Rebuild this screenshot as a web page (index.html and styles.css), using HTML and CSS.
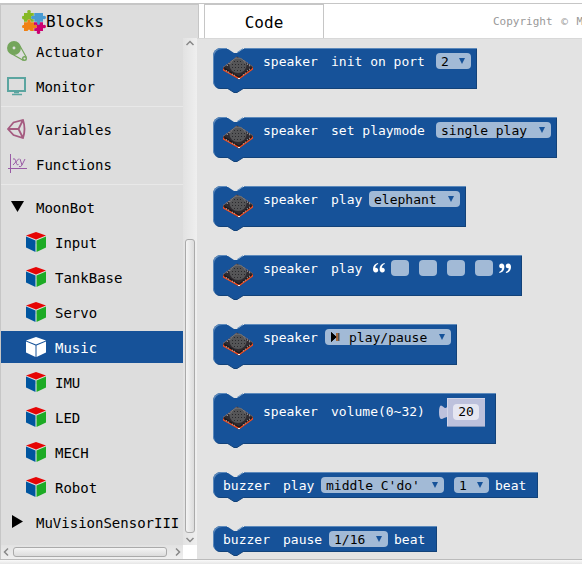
FILE: index.html
```html
<!DOCTYPE html>
<html lang="en">
<head>
<meta charset="utf-8">
<title>Blocks</title>
<link rel="stylesheet" href="styles.css">
</head>
<body>
<svg class="defs" aria-hidden="true">
  <symbol id="cube" viewBox="0 0 20 20">
    <path class="cube-top" d="M10 0 20 3.6 10 7.4 0 3.6z"/>
    <path class="cube-left" d="M0 4.6 9.5 8.4V20L0 15.6z"/>
    <path class="cube-right" d="M20 4.6 10.5 8.4V20L20 15.6z"/>
  </symbol>
  <symbol id="speaker" viewBox="0 0 30 31">
    <path d="M0 14.5 14 3.5 30 13.5V16L16 26.5 0 17z" fill="#2f2b30"/>
    <path d="M0 14.500 14 4M21 7.500 29.500 13.500" fill="none" stroke="#92797a" stroke-dasharray="2 1"/>
    <path d="M.5 15 16 24.500 29.500 14.500" fill="none" stroke="#1b191d" stroke-width="2"/>
    <path d="M.5 15.500V17L16 25.700 29.500 16V14.500" fill="none" stroke="#f04e23" stroke-width="1.400"/>
    <path d="M3 17.500l4 2.500M9 21l3 1.500M20 22l3-2.500M24 18l3-2M4 12.500l3-2M24 11l3 2" stroke="#a5a9ae" stroke-width="1.200" stroke-dasharray="1 1.500"/>
    <ellipse cx="15" cy="12.500" rx="8.500" ry="7.500" fill="#555557"/>
    <path d="M7.500 10.500q2.500-5.500 7.500-5.500t7.500 5.500" fill="none" stroke="#77777a"/>
    <path d="M11 8.500h9M9 11.500h13M9 14.500h13M11 17.500h9" stroke="#29292c" stroke-dasharray="1 2"/>
    <path d="M15 25h2v1h-2z" fill="#eee"/>
  </symbol>
  <symbol id="notch" viewBox="0 0 17 5">
    <path d="M0 0h17v1h-1L10 5H7L1 1H0z" fill="#e3e3e3"/>
    <path d="M10 4.600 16 .600" stroke="#6d98c4" fill="none"/>
  </symbol>
  <symbol id="tab" viewBox="0 0 17 5">
    <path d="M0 0h17L10 4.500H7z" fill="#165299"/>
    <path d="M1 .700 7 4.500h3L16 .700" stroke="#124279" fill="none"/>
  </symbol>
  <symbol id="quote" viewBox="0 0 12 16">
    <path d="M5 3C2 3.500 0 5.500 0 9c0 2 1 3.500 2.700 3.500S5.200 11.300 5.200 10 4.300 7.700 3 7.700c-.3 0-.6 0-.8.200C2.400 6 3.400 4.600 5.200 4zM11.600 3c-3 .500-5 2.500-5 6 0 2 1 3.500 2.700 3.500s2.500-1.200 2.500-2.500-.9-2.300-2.200-2.300c-.3 0-.6 0-.8.200.2-1.900 1.200-3.300 3-3.900z" fill="#fff"/>
  </symbol>
</svg>

<header class="topbar">
  <h1 class="title">
    <svg width="24" height="24" viewBox="0 0 24 24" aria-hidden="true">
      <path d="M2 3h3.500Q4.500 0 7 0t1.500 3H12v3q-3-1-3 1.500T12 9v3H8.500q1-2.500-1.500-2.500T5.500 12H2V9.500Q0 10 0 7.500T2 6z" fill="#86b823"/>
      <path d="M12 3h9v3q3-1 3 1.500T21 9v3h-3q1 3-1.500 3T15 12h-3V9q-3 1-3-1.500T12 6z" fill="#489bd3"/>
      <path d="M2 12h3.500q-1-2.500 1.500-2.500T8.500 12H12v3q3-1 3 1.500T12 18v3H8.500q-1.500-3-3 0H2v-3q-2 .500-2-1.500T2 15z" fill="#f08113"/>
      <path d="M12 12h3q0 3 1.500 3t1.500-3h3v3q3-1 3 1.500T21 18v3h-3q1 3-1.500 3T15 21h-3v-3q3 1 3-1.500T12 15z" fill="#cc0071"/>
      <path d="M12 3v3M12 9v3M2 12h3.500M8.500 12H15M18 12h3M12 18v3" stroke="#ddd" stroke-width=".500"/>
    </svg>
    Blocks
  </h1>
  <button class="code-tab" type="button">Code</button>
  <p class="copyright">Copyright <span>©</span> M</p>
</header>

<div class="main">
  <div class="panel">
    <div class="panel-body">
      <nav class="tree" aria-label="Block categories">
        <button class="row" type="button">
          <svg class="icon" viewBox="0 0 20 20" fill="none" stroke="#74a55b"><circle cx="7" cy="7" r="4.200" stroke-width="5.500"/><path d="M13 5l6.500 11.500M5 13l11.500 6.500" stroke-width="1.200"/><circle cx="17.500" cy="17.500" r="1.800" stroke-width="1.400"/></svg>
          Actuator</button>
        <button class="row" type="button">
          <svg class="icon" viewBox="0 0 20 20" fill="none" stroke="#5ba5a0"><path d="M1 2h17v13H1z" stroke-width="2"/><path d="M7 16.500h5M5 18.500h10" stroke-width="1.500"/></svg>
          Monitor</button>
        <hr>
        <button class="row" type="button">
          <svg class="icon" viewBox="0 0 20 20" fill="none" stroke="#a55b80" stroke-width="1.800"><path d="M1 10 6.500 3.500 16 1q3 9 0 18L6.500 16zM1 10h10.500L16 1M11.500 10 16 19"/></svg>
          Variables</button>
        <button class="row" type="button">
          <svg class="icon" viewBox="0 0 20 20" fill="none" stroke="#995ba5"><path d="M3.500 0v19M1 14.500h19M6 5q2-1 2.500 1.500l1 3q.500 2 2 1M12 4.500 6 11M13 5l2 6M18 5l-3 6q-1 2.500-3 1.500"/></svg>
          Functions</button>
        <hr>
        <button class="row" type="button" aria-expanded="true">
          <svg class="icon" viewBox="0 0 20 20"><path d="M4 4h13l-6.500 11z"/></svg>
          MoonBot</button>
        <button class="row child" type="button"><svg class="icon"><use href="#cube"/></svg>Input</button>
        <button class="row child" type="button"><svg class="icon"><use href="#cube"/></svg>TankBase</button>
        <button class="row child" type="button"><svg class="icon"><use href="#cube"/></svg>Servo</button>
        <button class="row child selected" type="button" aria-current="true"><svg class="icon"><use href="#cube"/></svg>Music</button>
        <button class="row child" type="button"><svg class="icon"><use href="#cube"/></svg>IMU</button>
        <button class="row child" type="button"><svg class="icon"><use href="#cube"/></svg>LED</button>
        <button class="row child" type="button"><svg class="icon"><use href="#cube"/></svg>MECH</button>
        <button class="row child" type="button"><svg class="icon"><use href="#cube"/></svg>Robot</button>
        <button class="row" type="button" aria-expanded="false">
          <svg class="icon" viewBox="0 0 20 20"><path d="M5 3v13l11-6.500z"/></svg>
          MuVisionSensorIII</button>
      </nav>
      <div class="scroll vertical" aria-hidden="true">
        <svg viewBox="0 0 10 10"><path d="M1.500 7 5 3.500 8.500 7"/></svg>
        <span class="thumb"></span>
        <svg viewBox="0 0 10 10"><path d="M1.500 3 5 6.500 8.500 3"/></svg>
      </div>
    </div>
    <div class="panel-foot" aria-hidden="true">
      <div class="scroll horizontal">
        <svg viewBox="0 0 10 10"><path d="M7 1.500 3.500 5 7 8.500"/></svg>
        <span class="thumb"></span>
        <svg viewBox="0 0 10 10"><path d="M3 1.500 6.500 5 3 8.500"/></svg>
      </div>
    </div>
  </div>

  <main class="flyout">
    <div class="block">
      <svg class="notch"><use href="#notch"/></svg><svg class="tab"><use href="#tab"/></svg>
      <svg class="photo"><use href="#speaker"/></svg>
      <span class="label" style="--n:7">speaker</span>
      <label class="label long" for="port" style="--n:12">init on port</label>
      <span class="drop" style="--n:1"><select id="port"><option>2</option></select></span>
    </div>
    <div class="block">
      <svg class="notch"><use href="#notch"/></svg><svg class="tab"><use href="#tab"/></svg>
      <svg class="photo"><use href="#speaker"/></svg>
      <span class="label" style="--n:7">speaker</span>
      <label class="label long" for="mode" style="--n:12">set playmode</label>
      <span class="drop" style="--n:11"><select id="mode"><option>single play</option></select></span>
    </div>
    <div class="block">
      <svg class="notch"><use href="#notch"/></svg><svg class="tab"><use href="#tab"/></svg>
      <svg class="photo"><use href="#speaker"/></svg>
      <span class="label" style="--n:7">speaker</span>
      <label class="label" for="sound" style="--n:4">play</label>
      <span class="drop" style="--n:8"><select id="sound"><option>elephant</option></select></span>
    </div>
    <div class="block">
      <svg class="notch"><use href="#notch"/></svg><svg class="tab"><use href="#tab"/></svg>
      <svg class="photo"><use href="#speaker"/></svg>
      <span class="label" style="--n:7">speaker</span>
      <span class="label" style="--n:4">play</span>
      <span class="notes">
        <svg class="quote"><use href="#quote"/></svg>
        <span class="cells">
          <input type="text" aria-label="Note 1"><input type="text" aria-label="Note 2"><input type="text" aria-label="Note 3"><input type="text" aria-label="Note 4">
        </span>
        <svg class="quote close"><use href="#quote"/></svg>
      </span>
    </div>
    <div class="block">
      <svg class="notch"><use href="#notch"/></svg><svg class="tab"><use href="#tab"/></svg>
      <svg class="photo"><use href="#speaker"/></svg>
      <label class="label" for="action" style="--n:7">speaker</label>
      <span class="drop with-icon" style="--n:10">
        <select id="action"><option>play/pause</option></select>
        <svg class="drop-icon" viewBox="0 0 10 10" aria-hidden="true"><path d="M0 0v10l5.500-5z"/><path d="M5 1h2v8H5z" fill="#a76b3d"/><path d="M0 0v10l5.500-5z"/><path d="M7 1h1.500v8H7z" fill="#555"/></svg>
      </span>
    </div>
    <div class="block tall">
      <svg class="notch"><use href="#notch"/></svg><svg class="tab"><use href="#tab"/></svg>
      <svg class="photo"><use href="#speaker"/></svg>
      <span class="label" style="--n:7">speaker</span>
      <label class="label" for="volume" style="--n:12">volume(0~32)</label>
      <span class="value">
        <svg class="plug" viewBox="0 0 8 16" aria-hidden="true"><path d="M8 3c-2 3-4-1.500-6-1.500Q0 2 0 8t2 7q2 0 3-1l3-1z" fill="#bdc1dc"/></svg>
        <span class="number"><input id="volume" type="text" value="20"></span>
      </span>
    </div>
    <div class="block">
      <svg class="notch"><use href="#notch"/></svg><svg class="tab"><use href="#tab"/></svg>
      <span class="label" style="--n:6">buzzer</span>
      <label class="label" for="tone" style="--n:4">play</label>
      <span class="drop" style="--n:12"><select id="tone"><option>middle C'do'</option></select></span>
      <span class="drop" style="--n:1"><select id="beats"><option>1</option></select></span>
      <label class="label" for="beats" style="--n:4">beat</label>
    </div>
    <div class="block">
      <svg class="notch"><use href="#notch"/></svg><svg class="tab"><use href="#tab"/></svg>
      <span class="label" style="--n:6">buzzer</span>
      <label class="label" for="rest" style="--n:5">pause</label>
      <span class="drop" style="--n:4"><select id="rest"><option>1/16</option></select></span>
      <span class="label" style="--n:4">beat</span>
    </div>
  </main>
</div>
<footer class="statusbar"></footer>
</body>
</html>
```
FILE: styles.css
```css
* {
  box-sizing: border-box;
}

body {
  --blue: #165299;
  --panel: #ddd;
  --line: #c6c6c6;
  display: flex;
  flex-direction: column;
  min-height: 100vh;
  margin: 0;
  padding-top: 3px;
  overflow: hidden;
  background: #fff;
  color: #000;
  font: 14px/20px "DejaVu Sans Mono", monospace;
}

button,
input,
select {
  margin: 0;
  padding: 0;
  border: 0;
  font: inherit;
  color: inherit;
  background: none;
}

.defs {
  position: absolute;
  width: 0;
  height: 0;
}

/* Header */
.topbar {
  display: flex;
  gap: 5px;
  height: 35px;
  border-top: 1px solid var(--line);
}

.title {
  display: flex;
  align-items: center;
  width: 199px;
  margin: 0;
  padding-left: 21px;
  border: 1px solid var(--line);
  border-bottom: 0;
  background: var(--panel);
  font-size: 16px;
  font-weight: 400;
}

.code-tab {
  width: 120px;
  padding-top: 3px;
  border: 1px solid var(--line);
  border-bottom: 0;
  font-size: 16px;
}

.copyright {
  width: 89px;
  margin: 0 0 0 auto;
  overflow: hidden;
  color: #999;
  font-size: 11px;
  line-height: 36px;
  white-space: nowrap;
}

.copyright span {
  margin: 0 2px;
}

/* Category panel */
.main {
  display: flex;
  flex: 1;
}

.panel {
  display: flex;
  flex-direction: column;
  width: 197px;
  border-left: 1px solid var(--line);
  background: var(--panel);
}

.panel-body {
  display: flex;
  flex: 1;
  overflow: hidden;
}

.tree {
  display: flex;
  flex: 1;
  flex-direction: column;
  gap: 3px;
  min-width: 0;
  margin-top: -3px;
  overflow: hidden;
}

.tree hr {
  width: 100%;
  margin: 1px 0 3px;
  border: 0;
  border-top: 1px solid #e8e8e8;
}

.row {
  display: flex;
  align-items: center;
  gap: 9px;
  height: 32px;
  padding: 2px 0 0 6px;
  text-align: left;
  white-space: nowrap;
}

.child {
  padding-left: 25px;
}

.icon {
  flex: none;
  width: 20px;
  height: 20px;
  margin-bottom: 2px;
  --top: #e60505;
  --left: #00559f;
  --right: #1dab25;
}

.child .icon {
  background: linear-gradient(#eee, #eee) center 12px / 2px 14px no-repeat;
}

.selected .icon {
  --top: #fff;
  --left: #fff;
  --right: #fff;
  background: none;
}

.cube-top { fill: var(--top); }
.cube-left { fill: var(--left); }
.cube-right { fill: var(--right); }

.row.selected {
  background: var(--blue);
  color: #fff;
}

.row.selected .icon {
  background: none;
}

/* Scroll bars */
.scroll {
  display: flex;
  align-items: center;
  gap: 2px;
}

.scroll svg {
  flex: none;
  width: 10px;
  height: 10px;
  fill: none;
  stroke: #888;
  stroke-width: 1.5;
}

.thumb {
  flex: 1;
  border: 1px solid #aaa;
  border-radius: 3px;
}

.vertical {
  flex-direction: column;
  width: 14px;
  background: linear-gradient(90deg, #e2e2e2, #efefef);
}

.vertical .thumb {
  width: 10px;
  margin-top: 189px;
  background: linear-gradient(90deg, #f4f4f4, #dcdcdc);
}

.panel-foot {
  display: flex;
  height: 14px;
  background: #fff;
}

.horizontal {
  flex: 1;
  margin-right: 14px;
  background: linear-gradient(#e2e2e2, #efefef);
}

.horizontal .thumb {
  height: 10px;
  margin-right: 4px;
  background: linear-gradient(#f4f4f4, #dcdcdc);
}

/* Block flyout */
.flyout {
  display: flex;
  flex: 1;
  flex-direction: column;
  align-items: flex-start;
  gap: 28px;
  min-width: 0;
  padding: 9px 0 7px 16px;
  border-top: 1px solid #d8d8d8;
  background: #e3e3e3;
  font-size: 13px;
}

.block {
  position: relative;
  display: flex;
  align-items: flex-start;
  gap: 6px;
  padding: 5px 6px 5px 10px;
  border-radius: 8px 0 0 8px;
  background: var(--blue);
  box-shadow: inset 1px 1px #5c89bb, inset -1px -1px #124279;
  color: #fff;
  line-height: 16px;
}

.tall {
  padding-top: 10px;
  padding-bottom: 10px;
}

.notch,
.tab {
  position: absolute;
  left: 14px;
  width: 17px;
  height: 5px;
}

.notch { top: 0; }
.tab { bottom: -4px; }

.photo {
  width: 30px;
  height: 31px;
  margin-right: 4px;
}

.label {
  width: calc(var(--n) * 8px);
  height: 16px;
  line-height: 18px;
  white-space: nowrap;
}

.label + .label,
.label + .value {
  margin-left: 6px;
}

.label:last-child,
.notes:last-child,
.value:last-child {
  margin-right: 5px;
}

.drop {
  position: relative;
  width: calc(var(--n) * 8px + 27px);
  height: 16px;
  border-radius: 4px;
  background: #a2bad6;
  color: #000;
}

.drop + .drop {
  margin-left: 4px;
}

.long + .drop {
  margin-left: 3px;
}

.drop select {
  display: block;
  width: 100%;
  height: 17px;
  padding: 1px 0 0 5px;
  appearance: none;
}

.drop::after {
  content: "";
  position: absolute;
  top: 5px;
  right: 6px;
  border: solid transparent;
  border-width: 6px 3px 0;
  border-top-color: var(--blue);
}

.with-icon {
  width: calc(var(--n) * 8px + 46px);
}

.with-icon select {
  padding-left: 24px;
}

.drop-icon {
  position: absolute;
  top: 3px;
  left: 6px;
  width: 10px;
  height: 10px;
}

.notes,
.cells {
  display: flex;
}

.notes {
  gap: 6px;
  margin-left: 4px;
}

.cells {
  gap: 10px;
}

.cells input {
  width: 18px;
  height: 16px;
  border-radius: 4px;
  background: #a2bad6;
}

.quote {
  width: 12px;
  height: 16px;
}

.close {
  transform: rotate(180deg);
}

.value {
  display: flex;
  align-items: center;
  margin-top: -5px;
}

.plug {
  width: 8px;
  height: 16px;
}

.number {
  padding: 6px;
  background: #bdc1dc;
  box-shadow: inset 1px 1px #d2d5e8, 0 1px #7d93bb;
}

.number input {
  display: block;
  width: 26px;
  height: 16px;
  border-radius: 4px;
  background: #e5e6f1;
  color: #000;
  text-align: center;
}

.statusbar {
  height: 5px;
  border-top: 1px solid #bbb;
  background: linear-gradient(#fafafa, #e6e6e6);
}
```
